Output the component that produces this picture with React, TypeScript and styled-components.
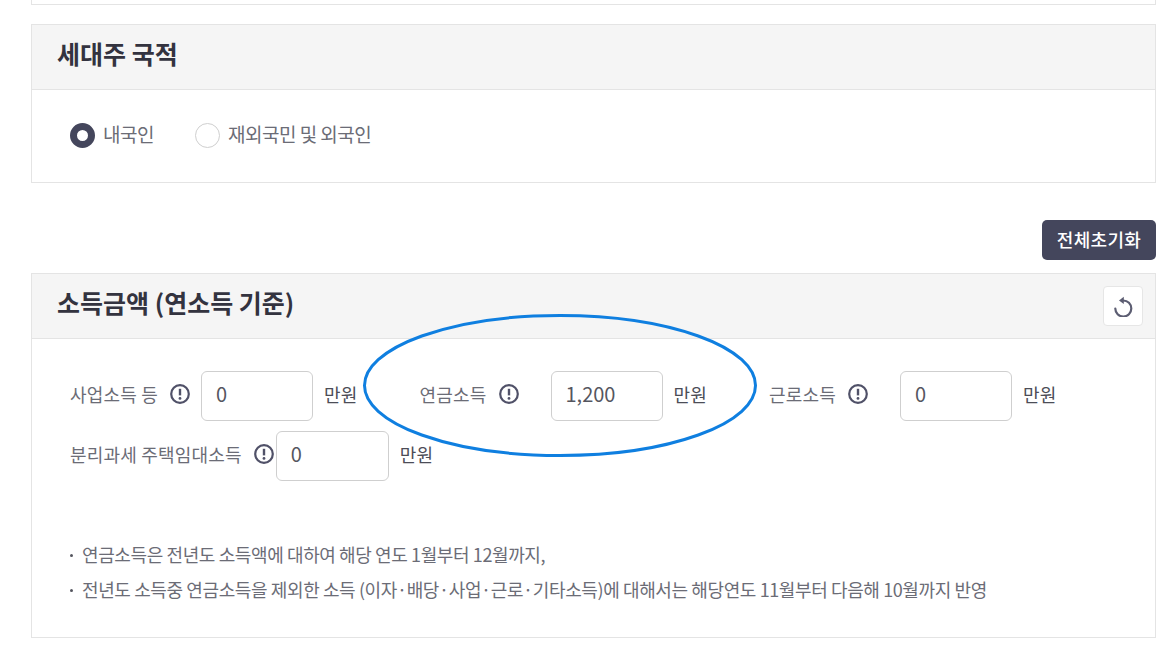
import styled, { createGlobalStyle } from "styled-components";

const GlobalStyle = createGlobalStyle`
  html, body {
    margin: 0;
    padding: 0;
    background: #fff;
    overflow: hidden;
  }
  body {
    font-family: "Noto Sans CJK KR", "Noto Sans", sans-serif;
    color: #6b6c76;
  }
`;

const Page = styled.div`
  position: relative;
  width: 1175px;
  height: 662px;
  box-sizing: border-box;
  padding: 0 19px 0 31px;
`;

const TopStub = styled.div`
  height: 5px;
  box-sizing: border-box;
  border: 1px solid #e4e4e4;
  border-top: 0;
  margin-bottom: 19px;
`;

const Card = styled.section<{ $height: number }>`
  height: ${(p) => p.$height}px;
  box-sizing: border-box;
  border: 1px solid #e4e4e4;
`;

const CardHeader = styled.header`
  height: 65px;
  box-sizing: border-box;
  display: flex;
  align-items: center;
  justify-content: space-between;
  padding: 0 12px 0 25px;
  background: #f5f5f5;
  border-bottom: 1px solid #e4e4e4;
`;

const CardTitle = styled.h2`
  margin: 0;
  padding-bottom: 8px;
  font-size: 25px;
  font-weight: 700;
  letter-spacing: 0;
  color: #33333f;
`;

const RadioRow = styled.div`
  display: flex;
  align-items: center;
  gap: 41px;
  padding: 33px 0 0 38px;
`;

const RadioItem = styled.label`
  display: flex;
  align-items: center;
  gap: 8px;
  font-size: 19px;
  letter-spacing: -0.5px;
`;

const RadioText = styled.span`
  line-height: 21px;
  margin-bottom: 4px;
`;

const RadioMark = styled.span<{ $checked?: boolean }>`
  width: 25px;
  height: 25px;
  box-sizing: border-box;
  border-radius: 50%;
  background: #fff;
  border: ${(p) => (p.$checked ? "7px solid #44465c" : "1px solid #cfcfcf")};
`;

const ActionBar = styled.div`
  display: flex;
  justify-content: flex-end;
  padding: 37px 0 13px;
`;

const ResetAllButton = styled.button`
  width: 114px;
  height: 40px;
  border: 0;
  border-radius: 5px;
  background: #44465c;
  color: #fff;
  font-family: inherit;
  font-size: 18px;
  font-weight: 500;
  letter-spacing: 0.3px;
  padding: 0 0 2px;
`;

const IconButton = styled.button`
  width: 40px;
  height: 40px;
  display: flex;
  align-items: center;
  justify-content: center;
  padding: 0;
  border: 1px solid #e6e6e6;
  border-radius: 4px;
  background: #fff;
`;

const FieldGrid = styled.div`
  display: grid;
  grid-template-columns: repeat(3, 349.5px);
  row-gap: 10px;
  padding: 32px 0 0 38px;
`;

const Field = styled.div`
  display: flex;
  align-items: center;
  height: 50px;
`;

const LabelBlock = styled.div`
  min-width: 131px;
  display: flex;
  align-items: center;
  flex-shrink: 0;
  padding: 0 2px 5px 0;
  box-sizing: border-box;
`;

const LabelText = styled.span`
  font-size: 18px;
  letter-spacing: 0.2px;
  white-space: nowrap;
  color: #6b6c76;
`;

const InfoIcon = styled.svg`
  width: 20px;
  height: 20px;
  margin-left: 12px;
  flex-shrink: 0;
`;

const AmountInput = styled.input<{ $wide?: boolean }>`
  width: ${(p) => (p.$wide ? 113 : 112)}px;
  height: 50px;
  box-sizing: border-box;
  padding: 0 14px 5px;
  border: 1px solid #cfcfcf;
  border-radius: 6px;
  background: #fff;
  font-family: inherit;
  font-size: 20px;
  color: #55565f;
  outline: none;
`;

const Unit = styled.span`
  margin-left: 11px;
  padding-bottom: 5px;
  font-size: 18px;
  letter-spacing: 0.2px;
  color: #4c4d57;
  white-space: nowrap;
`;

const NoteList = styled.ul`
  list-style: none;
  margin: 0;
  padding: 55px 0 0 38px;
`;

const NoteItem = styled.li`
  display: flex;
  align-items: center;
  gap: 9px;
  height: 35px;
  font-size: 18px;
  letter-spacing: -0.39px;
  white-space: nowrap;
  color: #6b6c76;

  &::before {
    content: "";
    width: 3px;
    height: 3px;
    margin-top: 3px;
    border-radius: 50%;
    background: #55565f;
  }
`;

const Highlight = styled.svg`
  position: absolute;
  left: 360px;
  top: 310px;
  width: 400px;
  height: 150px;
  pointer-events: none;
`;

function Info() {
  return (
    <InfoIcon viewBox="0 0 20 20" fill="none">
      <circle cx="10" cy="10" r="8.8" stroke="#505168" strokeWidth="2.2" />
      <path d="M10 4.8v6.6" stroke="#505168" strokeWidth="2.4" />
      <circle cx="10" cy="14.4" r="1.4" fill="#505168" />
    </InfoIcon>
  );
}

function AmountField({ label, value, wide }: { label: string; value: string; wide?: boolean }) {
  return (
    <Field>
      <LabelBlock>
        <LabelText>{label}</LabelText>
        <Info />
      </LabelBlock>
      <AmountInput defaultValue={value} $wide={wide} />
      <Unit>만원</Unit>
    </Field>
  );
}

export default function App() {
  return (
    <Page>
      <GlobalStyle />
      <TopStub />
      <Card $height={159}>
        <CardHeader>
          <CardTitle>세대주 국적</CardTitle>
        </CardHeader>
        <RadioRow>
          <RadioItem>
            <RadioMark $checked />
            <RadioText>내국인</RadioText>
          </RadioItem>
          <RadioItem>
            <RadioMark />
            <RadioText>재외국민 및 외국인</RadioText>
          </RadioItem>
        </RadioRow>
      </Card>
      <ActionBar>
        <ResetAllButton>전체초기화</ResetAllButton>
      </ActionBar>
      <Card $height={365}>
        <CardHeader>
          <CardTitle>소득금액 (연소득 기준)</CardTitle>
          <IconButton aria-label="초기화">
            <svg width="22" height="22" viewBox="0 0 22 22" fill="none">
              <path
                d="M11.3 5.5A8 8 0 1 1 3.3 13.5"
                stroke="#5c5d72"
                strokeWidth="2.2"
                strokeLinecap="round"
              />
              <path d="M7 5.4l4.8-3.6v7.2z" fill="#5c5d72" />
            </svg>
          </IconButton>
        </CardHeader>
        <FieldGrid>
          <AmountField label="사업소득 등" value="0" />
          <AmountField label="연금소득" value="1,200" />
          <AmountField label="근로소득" value="0" />
          <AmountField label="분리과세 주택임대소득" value="0" wide />
        </FieldGrid>
        <NoteList>
          <NoteItem>연금소득은 전년도 소득액에 대하여 해당 연도 1월부터 12월까지,</NoteItem>
          <NoteItem>
            전년도 소득중 연금소득을 제외한 소득 (이자·배당·사업·근로·기타소득)에 대해서는 해당연도 11월부터 다음해 10월까지 반영
          </NoteItem>
        </NoteList>
      </Card>
      <Highlight viewBox="0 0 400 150" fill="none">
        <ellipse cx="200" cy="75.5" rx="195.5" ry="70" stroke="#0f7fe0" strokeWidth="3" />
      </Highlight>
    </Page>
  );
}
